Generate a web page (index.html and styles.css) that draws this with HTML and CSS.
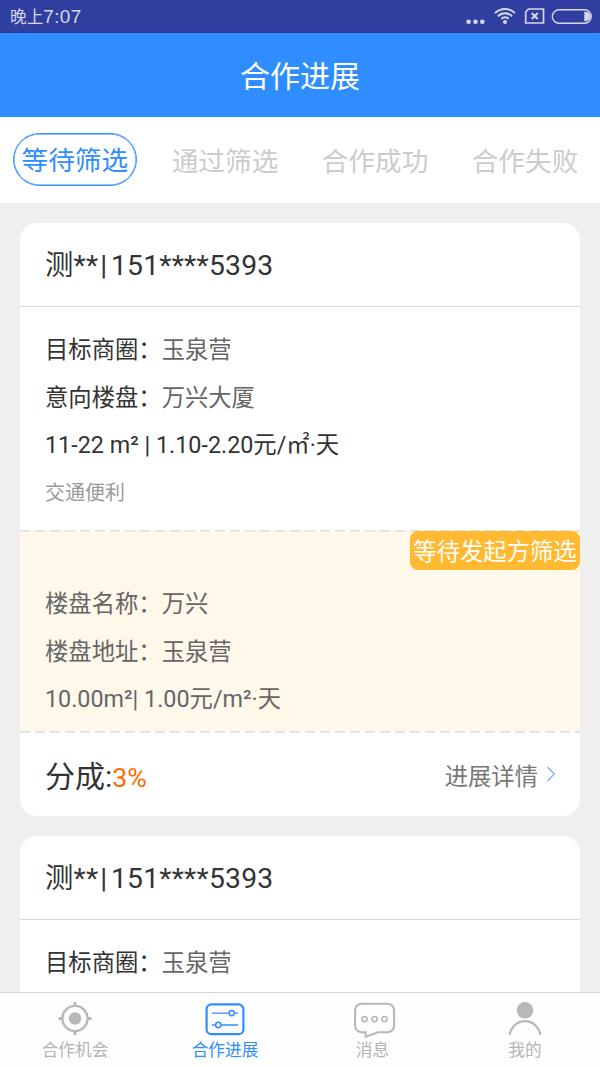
FILE: index.html
```html
<!DOCTYPE html>
<html lang="zh-CN">
<head>
<meta charset="utf-8">
<title>合作进展</title>
<link rel="stylesheet" href="styles.css">
</head>
<body>
<div class="app">
  <div class="status">
    <div class="clock">晚上<span class="clock-num">7:07</span></div>
    <svg class="status-icons" width="130" height="33" viewBox="0 0 130 33">
      <g fill="#d5d8ec"><circle cx="2.6" cy="21.8" r="2.3"/><circle cx="9.5" cy="21.8" r="2.3"/><circle cx="16.3" cy="21.8" r="2.3"/><circle cx="39" cy="22" r="2"/></g>
      <g fill="none" stroke="#d5d8ec" stroke-width="2"><path d="M29 14.300a14 14 0 0 1 20 0M32 17.400a10 10 0 0 1 14 0M35.300 20a5.500 5.500 0 0 1 7.400 0" transform="translate(0 -1.200)"/><path d="M62.500 9h15v14H59.700V12z" stroke-width="1.700"/><path d="M65.700 13l6 6M71.700 13l-6 6"/><rect x="86.300" y="9.700" width="39" height="13.600" rx="6.800" stroke-width="1.400"/></g>
      <path d="M118.300 11.800h1.500a4.700 4.700 0 0 1 0 9.400h-1.500z" fill="#d5d8ec"/>
    </svg>
  </div>
  <header class="header">合作进展</header>
  <nav class="tabs">
    <div class="tab"><span class="pill">等待筛选</span></div>
    <div class="tab">通过筛选</div>
    <div class="tab">合作成功</div>
    <div class="tab">合作失败</div>
  </nav>
  <main class="list">
    <article class="card">
      <h2 class="person">测**<span class="bar">|</span>151****5393</h2>
      <section class="demand">
        <p class="row">目标商圈：<span class="value">玉泉营</span></p>
        <p class="row">意向楼盘：<span class="value">万兴大厦</span></p>
        <p class="row area">11-22 m² | 1.10-2.20元/㎡·天</p>
        <p class="note">交通便利</p>
      </section>
      <section class="offer">
        <div class="badge">等待发起方筛选</div>
        <p class="row">楼盘名称：万兴</p>
        <p class="row">楼盘地址：玉泉营</p>
        <p class="row area">10.00m²| 1.00元/m²·天</p>
      </section>
      <footer class="share">
        <div class="share-label">分成:<span class="percent">3%</span></div>
        <div class="detail">进展详情
          <svg width="10" height="16" viewBox="0 0 10 16"><path d="M1.500 1L8.300 8l-6.800 7" fill="none" stroke="#64aaff" stroke-width="1.100"/></svg>
        </div>
      </footer>
    </article>
    <article class="card">
      <h2 class="person">测**<span class="bar">|</span>151****5393</h2>
      <section class="demand">
        <p class="row">目标商圈：<span class="value">玉泉营</span></p>
      </section>
    </article>
  </main>
  <nav class="bottom">
    <div class="item">
      <svg width="44" height="40" viewBox="0 0 44 40"><g fill="none" stroke="#b8b8b8" stroke-width="2.400"><circle cx="22" cy="19.500" r="12.600"/><path d="M22 3V7.500M22 31.500v4.500M5.500 19.500H10M34 19.500h4.500" stroke-width="3"/></g><circle cx="22" cy="19.500" r="6.200" fill="#b8b8b8"/></svg>
      <span>合作机会</span>
    </div>
    <div class="item active">
      <svg width="44" height="40" viewBox="0 0 44 40"><g fill="none" stroke="#308dff" transform="translate(0 -.6)"><rect x="3.600" y="5.900" width="36.800" height="29.900" rx="5" stroke-width="2.200"/><path d="M9 14.700h16.800M31.600 14.700H35M9 26.600h3.400M18.200 26.600H35" stroke-width="1.400"/><circle cx="28.700" cy="14.700" r="2.700" stroke-width="1.500"/><circle cx="15.300" cy="26.600" r="2.700" stroke-width="1.500"/></g></svg>
      <span>合作进展</span>
    </div>
    <div class="item shifted">
      <svg width="48" height="40" viewBox="0 0 48 40"><g fill="none" stroke="#b8b8b8" transform="translate(-.4 -.6)"><path d="M13 5.300h26a6.500 6.500 0 0 1 6.500 6.500v15.500a6.500 6.500 0 0 1-6.500 6.500H29.500L17 38.300V33.800H13a6.500 6.500 0 0 1-6.500-6.500V11.800A6.500 6.500 0 0 1 13 5.300z" stroke-width="2.100"/><g stroke-width="1.600"><circle cx="16" cy="20.700" r="2.600"/><circle cx="26" cy="20.700" r="2.600"/><circle cx="36" cy="20.700" r="2.600"/></g></g></svg>
      <span>消息</span>
    </div>
    <div class="item">
      <svg width="44" height="40" viewBox="0 0 44 40"><circle cx="22" cy="11.300" r="8.300" fill="#b8b8b8"/><path d="M6.600 36C8 28 14 22.200 22 22.200s14 5.800 15.400 13.800" fill="none" stroke="#b8b8b8" stroke-width="2.200"/></svg>
      <span>我的</span>
    </div>
  </nav>
</div>
</body>
</html>
```

FILE: styles.css
```css
* { box-sizing: border-box; }
body { margin: 0; font-family: Roboto, "Noto Sans CJK SC", sans-serif; color: #333; }
h2, p { margin: 0; font-weight: 400; }
.app { width: 600px; height: 1067px; display: flex; flex-direction: column; overflow: hidden; background: #efefef; }
.status { height: 33.3px; flex: none; display: flex; justify-content: space-between; padding: 0 4px 0 10px; background: #303f9f; color: #d5d8ec; }
.clock { font-size: 16.67px; line-height: 33px; }
.clock-num { font-family: "Liberation Sans", sans-serif; font-size: 19px; letter-spacing: 0.3px; }
.header { height: 83.4px; flex: none; padding-top: 2px; background: #308dff; color: #fff; font-size: 30px; line-height: 83px; text-align: center; }
.tabs { height: 86.3px; flex: none; display: grid; grid-template-columns: repeat(4, 1fr); align-items: center; background: #fff; color: #ccc; font-size: 26.67px; text-align: center; }
.pill { display: block; width: 124px; height: 53px; padding-top: 1px; line-height: 52px; border: 1px solid #308dff; box-shadow: inset 0 0 0 0.500px #308dff; border-radius: 27px; color: #308dff; margin: 0 auto; white-space: nowrap; text-indent: 7.500px; text-align: left; }
.list { flex: 1; min-height: 0; overflow: hidden; padding: 20px 20px 0; }
.card { height: 593.4px; margin-bottom: 20px; border-radius: 17px; background: #fff; overflow: hidden; }
.person { height: 84px; padding: 1px 0 0 25px; border-bottom: 1px solid #d6d6d6; font-size: 28.33px; line-height: 84px; letter-spacing: 0.2px; }
.bar { margin: 0 3.500px 0 2px; }
.demand { height: 223px; padding: 19px 25px 0; }
.row { font-size: 23.33px; line-height: 48px; white-space: pre; }
.area { line-height: 47px; }
.value { color: #666; }
.note { font-size: 20px; line-height: 48px; color: #999; }
.offer { position: relative; height: 203px; padding: 50px 25px 0; background-color: #fff8eb; color: #666; background-image: repeating-linear-gradient(90deg, #ddd 0 10.500px, #fff8eb 10.500px 15px), repeating-linear-gradient(90deg, #ddd 0 10.500px, #fff 10.500px 15px); background-size: 100% 1.500px; background-position: top, bottom; background-repeat: no-repeat; }
.badge { position: absolute; top: 1.500px; right: 0; width: 170px; height: 38.500px; padding-top: 2px; border-radius: 8px; background: #ffba32; color: #fff; font-size: 23.33px; line-height: 38px; text-align: center; }
.share { height: 84px; display: flex; align-items: center; justify-content: space-between; padding: 0 24px 0 25px; }
.share-label { font-size: 30px; margin-top: -2px; }
.percent { font-size: 26.67px; color: #ff6a00; }
.detail { display: flex; align-items: center; gap: 8px; font-size: 23.33px; color: #777; }
.detail svg { margin-top: -1px; }
.bottom { height: 75px; flex: none; display: grid; grid-template-columns: repeat(4, 1fr); border-top: 1px solid #d5d5d5; background: #fefefe; }
.item { display: flex; flex-direction: column; align-items: center; padding-top: 6px; color: #b4b4b4; font-size: 16.67px; line-height: 24px; }
.item svg { flex: none; }
.item.active { color: #308dff; }
.shifted { padding-right: 5px; }
```
